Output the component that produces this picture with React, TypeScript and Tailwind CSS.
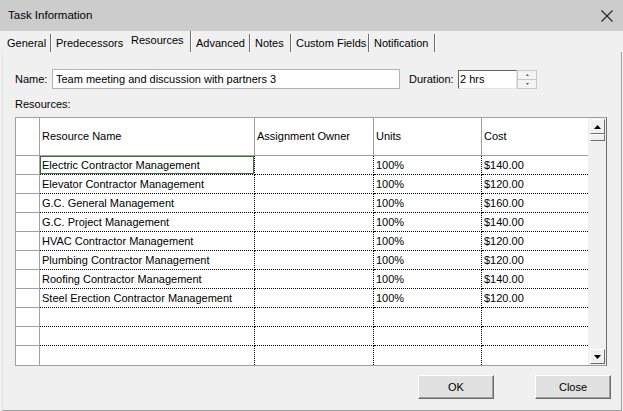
import React from 'react';

const tabs = [
  { label: 'General', w: 'w-[49px]', sep: true },
  { label: 'Predecessors', w: 'w-[76px]', sep: false },
  { label: 'Resources', w: 'w-[64px]', sep: true, active: true },
  { label: 'Advanced', w: 'w-[59px]', sep: true },
  { label: 'Notes', w: 'w-[41px]', sep: true },
  { label: 'Custom Fields', w: 'w-[78px]', sep: true },
  { label: 'Notification', w: 'w-[66px]', sep: true },
];

const rows: [string, string, string][] = [
  ['Electric Contractor Management', '100%', '$140.00'],
  ['Elevator Contractor Management', '100%', '$120.00'],
  ['G.C. General Management', '100%', '$160.00'],
  ['G.C. Project Management', '100%', '$140.00'],
  ['HVAC Contractor Management', '100%', '$120.00'],
  ['Plumbing Contractor Management', '100%', '$120.00'],
  ['Roofing Contractor Management', '100%', '$140.00'],
  ['Steel Erection Contractor Management', '100%', '$120.00'],
  ['', '', ''],
  ['', '', ''],
  ['', '', ''],
];

function Arrow({ up }: { up?: boolean }) {
  return (
    <svg width="7" height="4" viewBox="0 0 7 4">
      <polygon points={up ? '0,4 7,4 3.5,0' : '0,0 7,0 3.5,4'} fill="#000" />
    </svg>
  );
}

function ScrollButton({ up }: { up?: boolean }) {
  return (
    <div className="w-[15px] h-[15px] flex items-center justify-center bg-[#f0f0f0] border-t border-l border-t-white border-l-white border-b border-r border-b-[#6d6d6d] border-r-[#6d6d6d]">
      <Arrow up={up} />
    </div>
  );
}

function Button({ children }: { children: React.ReactNode }) {
  return (
    <button className="w-[76px] h-[24px] bg-[#e1e1e1] text-[11px] text-black border border-t-white border-l-white border-b-[#6b6b6b] border-r-[#6b6b6b] shadow-[inset_-1px_-1px_0_#a0a0a0]">
      {children}
    </button>
  );
}

export default function App() {
  return (
    <div className="w-[623px] h-[411px] bg-[#f0f0f0] flex flex-col font-['Liberation_Sans',Arial,sans-serif] text-black overflow-hidden">
      {/* Title bar */}
      <div className="h-[31px] shrink-0 bg-[#cccccc] flex items-center justify-between pl-[8px] pr-[10px]">
        <span className="text-[11.5px]">Task Information</span>
        <svg width="12" height="12" viewBox="0 0 12 12" className="mt-[1px]">
          <path d="M0.5 0.5 L11.5 11.5 M11.5 0.5 L0.5 11.5" stroke="#222" strokeWidth="1.1" />
        </svg>
      </div>

      {/* Tabs */}
      <div className="h-[21px] shrink-0 flex items-end pl-[2px] text-[11px]">
        {tabs.map((t) => (
          <div
            key={t.label}
            className={`${t.w} flex items-center ${t.active ? 'h-[21px] pb-[3px] pl-[4px]' : 'h-[18px] pl-[5px]'} ${
              t.sep ? 'border-r border-r-[#6d6d6d] shadow-[1px_0_0_#ffffff]' : ''
            }`}
          >
            {t.label}
          </div>
        ))}
      </div>

      {/* Tab page */}
      <div className="flex-1 ml-[2px] mr-[1px] border-l border-r border-b border-l-[#e3e3e3] border-r-[#a0a0a0] border-b-[#a0a0a0] flex flex-col pl-[12px] pr-[10px] pt-[17px] text-[11px]">
        {/* Name / Duration */}
        <div className="flex items-center h-[20px]">
          <span className="w-[37px]">Name:</span>
          <div className="w-[348px] h-[20px] bg-white border border-[#b4b4b4] flex items-center pl-[3px]">
            Team meeting and discussion with partners 3
          </div>
          <span className="ml-[9px] w-[49px]">Duration:</span>
          <div className="w-[59px] h-[19px] bg-white border-t border-l border-t-[#646464] border-l-[#646464] border-b border-r border-b-[#e3e3e3] border-r-[#e3e3e3] flex items-center pl-[1px]">
            2 hrs
          </div>
          <div className="w-[20px] h-[19px] flex flex-col border border-[#c8c8c8] bg-[#f4f4f4]">
            <div className="flex-1 flex items-center justify-center border-b border-[#c8c8c8]">
              <svg width="3" height="2" viewBox="0 0 3 2"><polygon points="0,2 3,2 1.5,0" fill="#555" /></svg>
            </div>
            <div className="flex-1 flex items-center justify-center">
              <svg width="3" height="2" viewBox="0 0 3 2"><polygon points="0,0 3,0 1.5,2" fill="#555" /></svg>
            </div>
          </div>
        </div>

        <div className="mt-[8px] h-[14px] leading-[14px]">Resources:</div>

        {/* Grid */}
        <div className="mt-[6px] w-[592px] flex border-l border-t border-b border-[#a0a0a0] border-r border-r-[#6d6d6d]">
          <div className="w-[572px] bg-white grid grid-cols-[24px_215px_119px_108px_106px] content-start">
            <div className="h-[38px] border-r border-b border-[#a0a0a0]" />
            <div className="h-[38px] border-r border-b border-[#a0a0a0] flex items-center pl-[2px]">Resource Name</div>
            <div className="h-[38px] border-r border-b border-[#a0a0a0] flex items-center pl-[2px]">Assignment Owner</div>
            <div className="h-[38px] border-r border-b border-[#a0a0a0] flex items-center pl-[2px]">Units</div>
            <div className="h-[38px] border-b border-[#a0a0a0] flex items-center pl-[2px]">Cost</div>
            {rows.map((r, i) => {
              const last = i === rows.length - 1;
              const dot = last ? 'border-r border-dotted border-black' : 'border-r border-b border-dotted border-black';
              return (
                <React.Fragment key={i}>
                  <div className={`h-[19px] border-r border-[#a0a0a0] ${last ? '' : 'border-b'}`} />
                  <div
                    className={`h-[19px] ${dot} flex items-center pl-[2px] whitespace-nowrap ${
                      i === 0 ? 'shadow-[inset_0_0_0_1px_#3c6e3e]' : ''
                    }`}
                  >
                    {r[0]}
                  </div>
                  <div className={`h-[19px] ${dot}`} />
                  <div className={`h-[19px] ${dot} flex items-center pl-[2px]`}>{r[1]}</div>
                  <div className={`h-[19px] ${last ? '' : 'border-b border-dotted border-black'} flex items-center pl-[2px]`}>{r[2]}</div>
                </React.Fragment>
              );
            })}
          </div>
          {/* Scrollbar */}
          <div className="w-[18px] flex flex-col items-center justify-between pt-[1px] pb-[1px] pl-[1px]">
            <div className="flex flex-col">
              <ScrollButton up />
              <div className="w-[15px] h-[7px] bg-[#f0f0f0] border-t border-l border-t-white border-l-white border-b border-r border-b-[#6d6d6d] border-r-[#6d6d6d]" />
            </div>
            <ScrollButton />
          </div>
        </div>

        {/* Buttons */}
        <div className="mt-[9px] flex justify-end gap-[41px]">
          <Button>OK</Button>
          <Button>Close</Button>
        </div>
      </div>
    </div>
  );
}
